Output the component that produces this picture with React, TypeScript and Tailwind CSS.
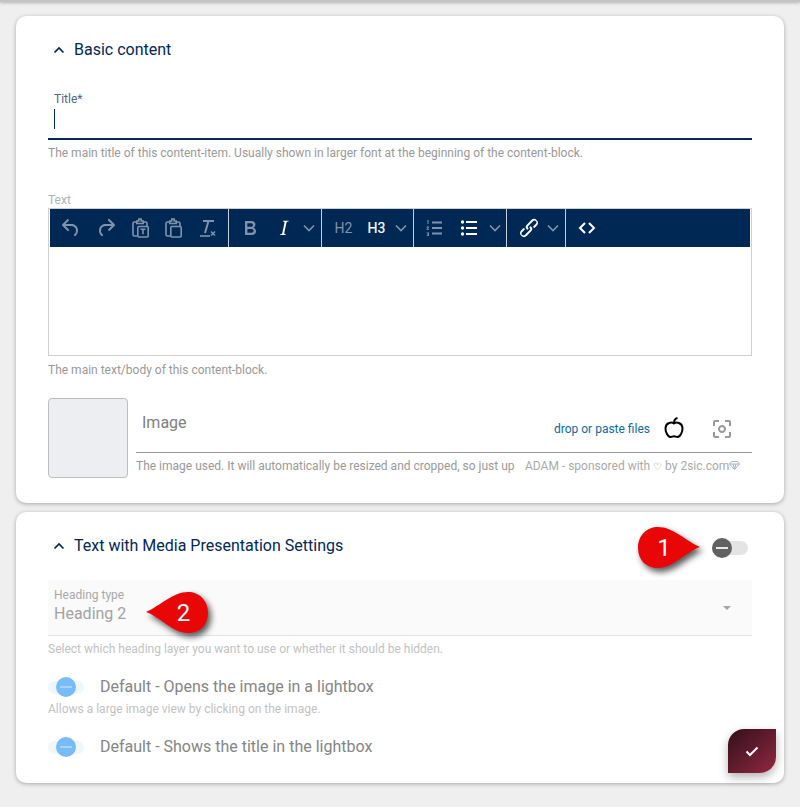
import React from "react";
import { MdCenterFocusWeak } from "react-icons/md";

const P = ({ d, size = 24, cls = "" }: { d: string; size?: number; cls?: string }) => (
  <svg width={size} height={size} viewBox="0 0 24 24" className={`fill-current ${cls}`}>
    <path d={d} />
  </svg>
);

const Chevron = ({ cls = "" }: { cls?: string }) => (
  <svg width="12" height="8" viewBox="0 0 12 8" fill="none" stroke="currentColor" strokeWidth="1.6" className={cls}>
    <path d="M1 1.5 6 6.5 11 1.5" />
  </svg>
);

const Slot = ({ w, children }: { w: number; children: React.ReactNode }) => (
  <div className="flex items-center justify-center h-full shrink-0" style={{ width: w }}>
    {children}
  </div>
);

const Group = ({ w, last, children }: { w: number; last?: boolean; children: React.ReactNode }) => (
  <div
    className={`flex items-center h-full shrink-0 ${last ? "" : "border-r border-[#c9cfd8]"}`}
    style={{ width: w }}
  >
    {children}
  </div>
);

const dim = "text-[#8093ab]";

const Clip = ({ t }: { t?: boolean }) => (
  <svg width="24" height="24" viewBox="0 0 24 24" fill="none" stroke="currentColor" strokeWidth="1.6" className={dim}>
    <path d="M8.500 6H6.500A1.500 1.500 0 0 0 5 7.500v11A1.500 1.500 0 0 0 6.500 20H9" />
    <path d="M15.500 6h2A1.500 1.500 0 0 1 19 7.500V10" />
    <path d="M8.800 7.500V5h2V3h2.400v2h2v2.500z" />
    <rect x="9.800" y="10.500" width="10.400" height="10.500" rx="1" />
    {t ? <path d="M12.500 13.300h5M15 13.300v5" /> : <path d="M9.800 10.500" />}
  </svg>
);

const Toolbar = () => (
  <div className="flex items-center h-[38px] mx-px bg-[#002855] text-white">
    <Group w={179}>
      <div className="w-[3px]" />
      <Slot w={35}><P cls={dim} d="M6.4 8H12c3.7 0 6.2 2 6.8 5.1.6 2.7-.4 5.6-2.3 6.8a1 1 0 0 1-1-1.8c1.1-.6 1.8-2.7 1.4-4.6-.5-2.1-2.1-3.5-4.9-3.5H6.4l3.3 3.3a1 1 0 1 1-1.4 1.4l-5-5a1 1 0 0 1 0-1.4l5-5a1 1 0 0 1 1.4 1.4L6.4 8Z" /></Slot>
      <Slot w={36}><P cls={dim} d="M17.6 10H12c-2.8 0-4.4 1.4-4.9 3.5-.4 2 .3 4 1.4 4.6a1 1 0 1 1-1 1.8c-2-1.2-2.9-4.1-2.3-6.8.6-3 3-5.1 6.8-5.1h5.6l-3.3-3.3a1 1 0 1 1 1.4-1.4l5 5a1 1 0 0 1 0 1.4l-5 5a1 1 0 0 1-1.4-1.4l3.3-3.3Z" /></Slot>
      <Slot w={32}><Clip t /></Slot>
      <Slot w={34}><Clip /></Slot>
      <Slot w={34}>
        <svg width="24" height="24" viewBox="0 0 24 24" className={dim} fill="none" stroke="currentColor">
          <path d="M8 5h11M13.500 5 10 17" strokeWidth="2" />
          <path d="M5 20h10" strokeWidth="1.600" />
          <path d="m16 15.500 4 4m0-4-4 4" strokeWidth="1.500" />
        </svg>
      </Slot>
    </Group>
    <Group w={93}>
      <div className="w-[4px]" />
      <Slot w={34}><P cls={dim} d="M7.8 19c-.3 0-.5 0-.6-.2l-.2-.5V5.700c0-.2 0-.4.2-.5l.6-.2h5c1.500 0 2.700.3 3.500 1 .7.6 1.100 1.400 1.100 2.500a3 3 0 0 1-.6 1.900c-.4.6-1 1-1.600 1.200.4.1.9.3 1.300.6s.8.7 1 1.200c.4.4.5 1 .5 1.600 0 1.300-.4 2.300-1.300 3-.8.7-2.100 1-3.800 1H7.800Zm5-8.300c.6 0 1.200-.1 1.600-.5.4-.3.6-.7.6-1.300 0-1.100-.8-1.700-2.300-1.700H9.300v3.500h3.400Zm.5 6c.7 0 1.300-.1 1.700-.4.4-.4.6-.9.6-1.500s-.2-1-.7-1.400c-.4-.3-1-.4-2-.4H9.400v3.800h4Z" /></Slot>
      <Slot w={34}><P d="m16.700 4.700-.1.900h-.3c-.6 0-1 0-1.400.3-.3.3-.4.6-.5 1.100l-2.100 9.800v.6c0 .5.400.8 1.400.8h.2l-.2.8H8l.2-.8h.2c1.100 0 1.800-.5 2-1.500l2-9.800.1-.5c0-.6-.4-.8-1.400-.8h-.3l.2-.9h5.800Z" /></Slot>
      <Slot w={16}><Chevron cls={dim} /></Slot>
    </Group>
    <Group w={92}>
      <div className="w-[5px]" />
      <Slot w={33}><span className={`text-[14px] ${dim}`}>H2</span></Slot>
      <Slot w={33}><span className="text-[14px] text-white [-webkit-text-stroke:0.2px_white]">H3</span></Slot>
      <Slot w={16}><Chevron cls={dim} /></Slot>
    </Group>
    <Group w={93}>
      <div className="w-[3px]" />
      <Slot w={34}>
        <svg width="24" height="24" viewBox="0 0 24 24" className={dim} fill="currentColor">
          <rect x="10" y="5.500" width="10" height="2" />
          <rect x="10" y="11" width="10" height="2" />
          <rect x="10" y="16.500" width="10" height="2" />
          <path d="M5.500 4h1v4h-1V5H5ZM4.500 10.500h2.500v1l-1.500 1.200H7v1H4.500v-1l1.500-1.200H4.500ZM4.500 16.500H7v3.500H4.500v-.8H6v-.6H5v-.8h1v-.5H4.500Z" />
        </svg>
      </Slot>
      <Slot w={36}>
        <svg width="24" height="24" viewBox="0 0 24 24" fill="currentColor">
          <rect x="9" y="5" width="11" height="2" />
          <rect x="9" y="11" width="11" height="2" />
          <rect x="9" y="17" width="11" height="2" />
          <circle cx="5.500" cy="6" r="1.700" />
          <circle cx="5.500" cy="12" r="1.700" />
          <circle cx="5.500" cy="18" r="1.700" />
        </svg>
      </Slot>
      <Slot w={16}><Chevron cls={dim} /></Slot>
    </Group>
    <Group w={59}>
      <div className="w-[5px]" />
      <Slot w={33}><P d="M6.200 12.300a1 1 0 0 1 1.400 1.400l-2 2a2 2 0 1 0 2.600 2.800l4.800-4.800a1 1 0 0 0 0-1.400 1 1 0 1 1 1.400-1.300 2.900 2.900 0 0 1 0 4L9.600 20a3.900 3.900 0 0 1-5.500-5.500l2-2Zm11.600-.6a1 1 0 0 1-1.400-1.400l2-2a2 2 0 1 0-2.600-2.800L11 10.300a1 1 0 0 0 0 1.400A1 1 0 1 1 9.600 13a2.900 2.900 0 0 1 0-4L14.400 4a3.900 3.900 0 0 1 5.500 5.500l-2 2Z" /></Slot>
      <Slot w={16}><Chevron cls={dim} /></Slot>
    </Group>
    <Group w={60} last>
      <div className="w-[4px]" />
      <Slot w={34}>
        <svg width="24" height="24" viewBox="0 0 24 24" fill="none" stroke="currentColor" strokeWidth="2">
          <path d="M10 7 5 12l5 5M14 7l5 5-5 5" />
        </svg>
      </Slot>
    </Group>
  </div>
);

const Toggle = () => (
  <div className="relative w-9 h-[13px] rounded-full bg-[#eef6fe] shrink-0">
    <div className="absolute left-2 top-[-3.500px] w-5 h-5 rounded-full bg-[#78bbf9] flex items-center justify-center">
      <div className="w-3 h-[2px] bg-[#a6d2fb]" />
    </div>
  </div>
);

const SectionHead = ({ title, children }: { title: string; children?: React.ReactNode }) => (
  <div className="flex items-center h-5 pl-[37px] pr-[36px]">
    <svg width="12" height="8" viewBox="0 0 12 8" fill="none" stroke="#002855" strokeWidth="1.700" className="shrink-0">
      <path d="M1.500 6.500 6 2l4.500 4.500" />
    </svg>
    <span className="ml-[9px] text-[16px] text-[#002855]">{title}</span>
    <div className="flex-1" />
    {children}
  </div>
);

const Drop = ({ label, left, top, dir }: { label: string; left: number; top: number; dir: "r" | "l" }) => (
  <div className="absolute w-[62px] h-[42px]" style={{ left, top }}>
    <svg width="62" height="42" viewBox="0 0 62 42" className="absolute inset-0 overflow-visible drop-shadow-[3px_4px_3px_rgba(0,0,0,0.65)]">
      <path
        fill="#e90606"
        transform={dir === "l" ? "translate(62 0) scale(-1 1)" : undefined}
        d="M0 21C0 8 9 0 20 0 35 0 48 14 62 20 48 25 35 41 20 41 9 41 0 34 0 21Z"
      />
    </svg>
    <span className="absolute inset-0 flex items-center justify-center text-white text-[24px] leading-none" style={{ paddingRight: dir === "r" ? 10 : 0, paddingLeft: dir === "l" ? 13 : 0 }}>
      {label}
    </span>
  </div>
);

export default function App() {
  return (
    <div className="relative min-h-[807px] bg-[#efefef] pt-4 px-4 font-['Roboto',sans-serif] overflow-hidden">
      <div className="absolute top-0 inset-x-0 h-[2px] bg-[#c4c4c4] shadow-[0_1px_3px_rgba(0,0,0,0.3)]" />

      <section className="bg-white rounded-[10px] shadow-[0_1px_4px_rgba(0,0,0,0.3)] h-[487px] pt-[24px]">
        <SectionHead title="Basic content" />

        <div className="mx-8 mt-[19px] h-[61px] border-b-2 border-[#002855] relative">
          <div className="pl-[6px] text-[12px] leading-[16px] pt-[12px] text-[#4c6680]">Title*</div>
          <div className="absolute left-[6px] top-[30px] w-px h-[20px] bg-[#002855]" />
        </div>
        <div className="mx-8 mt-[5px] text-[12px] leading-[16px] text-[#999]">
          The main title of this content-item. Usually shown in larger font at the beginning of the content-block.
        </div>

        <div className="mx-8 mt-[31px] text-[12px] leading-[16px] text-[#b0b0b0]">Text</div>
        <div className="mx-8 h-[148px] border border-[#cfcfcf] pt-0">
          <Toolbar />
        </div>
        <div className="mx-8 mt-[6px] text-[12px] leading-[16px] text-[#999]">The main text/body of this content-block.</div>

        <div className="mx-8 mt-[20px] flex">
          <div className="w-20 h-20 shrink-0 bg-[#eceef1] border border-[#bdbdbd] rounded-[4px]" />
          <div className="ml-2 flex-1 min-w-0">
            <div className="h-[55px] border-b border-[#999] flex items-start">
              <span className="ml-[6px] mt-[15px] text-[16px] leading-5 text-[#808080]">Image</span>
              <div className="flex-1" />
              <span className="mt-[23px] text-[12px] leading-[16px] text-[#0b6aa2]">drop or paste files</span>
              <svg width="22" height="24" viewBox="0 0 22 24" fill="none" stroke="#000" strokeWidth="2" className="ml-[13px] mt-[18px]">
                <path d="M11 7.500C9 6 3 6 2.500 12c-.3 4 2.500 9 5 9 1.500 0 2-.8 3.500-.8s2 .8 3.500.8c2.500 0 5.300-5 5-9C19 6 13 6 11 7.500Z" />
                <path d="M11 7c0-2.500 1-4.500 3.500-5" />
              </svg>
              <div className="ml-[25px] mr-[18px] mt-[19px] text-[#999]"><MdCenterFocusWeak size={24} /></div>
            </div>
            <div className="flex mt-[5px] text-[12px] leading-[16px] text-[#aaa]">
              <div className="w-[376px] whitespace-nowrap text-[#999]">
                The image used. It will automatically be resized and cropped, so just up
              </div>
              <div className="ml-[13px] whitespace-nowrap flex items-center">
                <span>ADAM - sponsored with <span className="text-[10px] text-[#888]">♡</span> by 2sic.com</span>
                <svg width="11" height="9" viewBox="0 0 11 9" fill="none" stroke="#a9b4c4" strokeWidth="1" className="mb-[3px]"><path d="M2.500.5h6l2 2.500-5 5.500-5-5.500ZM.5 3h10M4 3l1.500 5L7 3" /></svg>
              </div>
            </div>
          </div>
        </div>
      </section>

      <section className="mt-[9px] bg-white rounded-[10px] shadow-[0_1px_4px_rgba(0,0,0,0.3)] h-[271px] pt-[24px]">
        <SectionHead title="Text with Media Presentation Settings">
          <div className="relative w-9 h-[14px] rounded-full bg-[#e4e4e4] mt-[3px]">
            <div className="absolute left-0 top-[-3px] w-5 h-5 rounded-full bg-[#616161] flex items-center justify-center">
              <div className="w-3 h-[2px] bg-[#e8e8e8]" />
            </div>
          </div>
        </SectionHead>

        <div className="mx-8 mt-[24px] h-[56px] bg-[#fafafa] border-b border-[#e3e3e3] flex items-start px-[6px] relative">
          <div className="pt-[7px]">
            <div className="text-[12px] leading-4 text-[#a8a8a8]">Heading type</div>
            <div className="text-[16px] leading-5 mt-px text-[#a3a3a3]">Heading 2</div>
          </div>
          <div className="flex-1" />
          <div className="mt-[26px] mr-[15px] w-0 h-0 border-x-[4px] border-x-transparent border-t-[4px] border-t-[#a6a6a6]" />
        </div>
        <div className="mx-8 mt-[5px] text-[12px] leading-4 text-[#c2c2c2]">Select which heading layer you want to use or whether it should be hidden.</div>

        <div className="mx-8 mt-[20px] h-5 flex items-center">
          <Toggle />
          <span className="ml-4 text-[16px] text-[#858585]">Default - Opens the image in a lightbox</span>
        </div>
        <div className="mx-8 mt-[4px] text-[12px] leading-4 text-[#c2c2c2]">Allows a large image view by clicking on the image.</div>

        <div className="mx-8 mt-[20px] h-5 flex items-center">
          <Toggle />
          <span className="ml-4 text-[16px] text-[#858585]">Default - Shows the title in the lightbox</span>
        </div>
      </section>

      <Drop label="1" left={638} top={527} dir="r" />
      <Drop label="2" left={146} top={592} dir="l" />

      <div className="absolute left-[728px] top-[729px] w-12 h-11 rounded-tl-2xl rounded-br-2xl bg-gradient-to-br from-[#340f1c] to-[#92293f] shadow-[0_4px_10px_rgba(0,0,0,0.3)] flex items-center justify-center">
        <svg width="14" height="11" viewBox="0 0 14 11" fill="none" stroke="#fff" strokeWidth="2"><path d="m1.500 5.500 3.500 3.500 7.500-7.500" /></svg>
      </div>
    </div>
  );
}
